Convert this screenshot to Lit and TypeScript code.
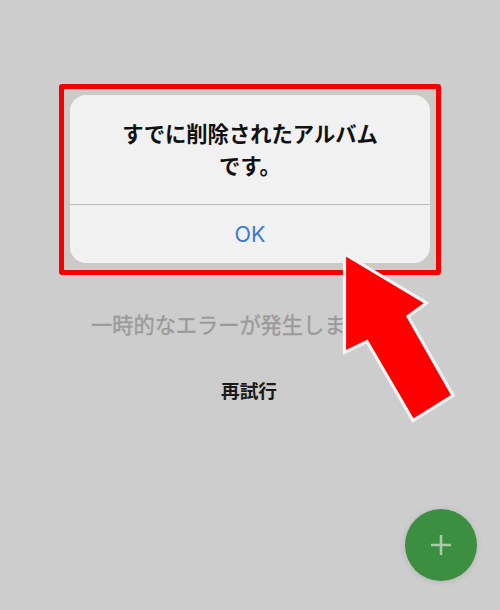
import { LitElement, html, css } from "lit";
import { customElement } from "lit/decorators.js";

@customElement("app-root")
export class AppRoot extends LitElement {
  static styles = css`
    :host {
      display: block;
      width: 500px;
      height: 610px;
      font-family: "Noto Sans CJK JP", "Noto Sans", sans-serif;
    }
    .page {
      position: relative;
      box-sizing: border-box;
      width: 500px;
      height: 610px;
      overflow: hidden;
      background: #cdcdcd;
      padding-top: 308px;
      display: flex;
      flex-direction: column;
      align-items: center;
    }
    .error {
      font-size: 21.2px;
      line-height: 32px;
      font-weight: 400;
      -webkit-text-stroke: 0.35px #9a9a9a;
      color: #9a9a9a;
      white-space: nowrap;
    }
    .retry {
      margin-top: 34px;
      margin-right: 2px;
      font-size: 18.7px;
      line-height: 32px;
      font-weight: 700;
      color: #1a1a1a;
    }
    .frame {
      position: absolute;
      left: 59px;
      top: 84px;
      width: 382px;
      height: 191px;
      box-sizing: border-box;
      border: 5px solid #f40000;
      border-radius: 3px;
      padding: 6px 6px 7px;
      background: #cbcac7;
    }
    .dialog {
      height: 100%;
      border-radius: 16px;
      background: #f1f1f1;
      display: flex;
      flex-direction: column;
    }
    .title {
      height: 110px;
      box-sizing: border-box;
      padding-top: 22px;
      border-bottom: 1px solid #bdbdbd;
      text-align: center;
      font-size: 21.3px;
      line-height: 32px;
      font-weight: 700;
      color: #111;
    }
    .ok {
      flex: 1;
      display: flex;
      align-items: center;
      justify-content: center;
      font-family: "Inter", "Noto Sans", sans-serif;
      font-size: 21.5px;
      color: #3a78d6;
    }
    .arrow {
      position: absolute;
      left: 0;
      top: 0;
    }
    .fab {
      position: absolute;
      left: 405px;
      top: 509px;
      width: 72px;
      height: 72px;
      border-radius: 50%;
      background: #3c8f40;
      box-shadow: 0 1px 6px rgba(0, 0, 0, 0.12);
      display: flex;
      align-items: center;
      justify-content: center;
    }
  `;

  render() {
    return html`
      <div class="page">
        <div class="error">一時的なエラーが発生しました。</div>
        <div class="retry">再試行</div>
        <div class="frame">
          <div class="dialog">
            <div class="title">すでに削除されたアルバム<br />です。</div>
            <div class="ok">OK</div>
          </div>
        </div>
        <svg class="arrow" width="500" height="610" viewBox="0 0 500 610">
          <path
            d="M344.5 254 L426.5 303 L408 316.5 L453 395.5 L413 420.5 L367 341.5 L344.5 352.5 Z"
            fill="#fe0000"
            stroke="#f4f4f4"
            stroke-width="3.2"
            stroke-linejoin="miter"
          />
        </svg>
        <div class="fab">
          <svg width="22" height="24" viewBox="0 0 22 24">
            <path d="M1 12 H21 M11 2 V22" stroke="#a9cbaa" stroke-width="2.6" fill="none" />
          </svg>
        </div>
      </div>
    `;
  }
}
